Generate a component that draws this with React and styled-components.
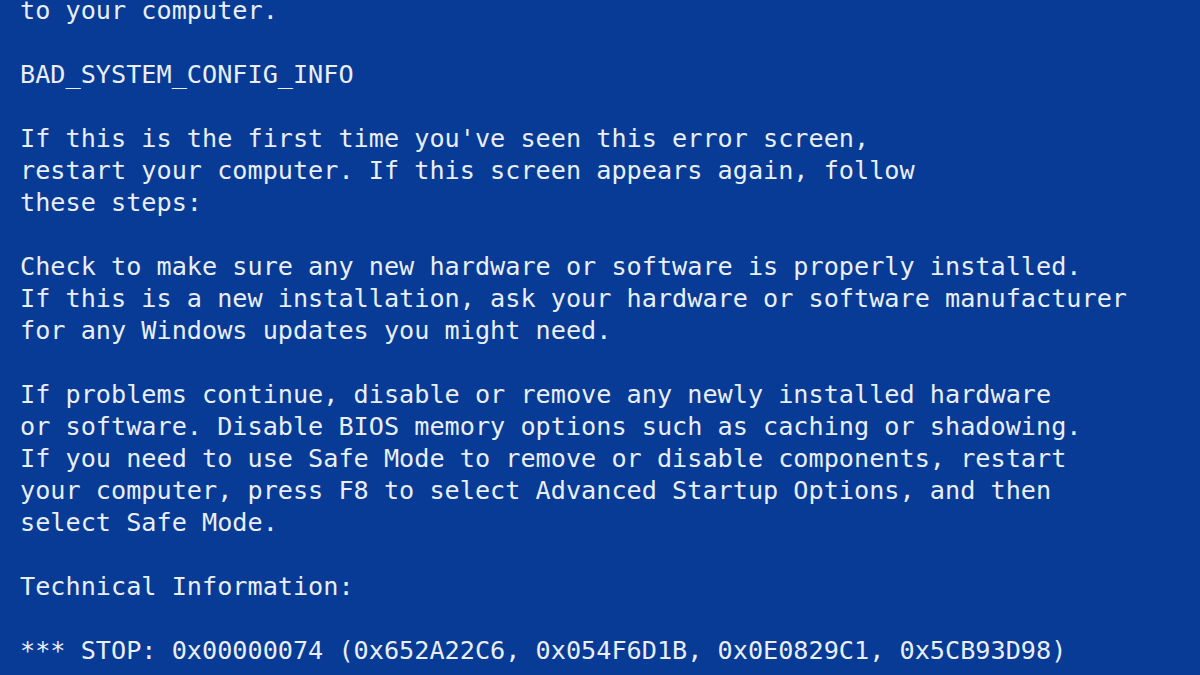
import React from 'react'
import styled, { createGlobalStyle } from 'styled-components'

const Global = createGlobalStyle`
html, body {
  margin: 0;
  padding: 0;
  background: #073b95;
}
`

const Screen = styled.div`
width: 1200px;
height: 675px;
overflow: hidden;
background-color: #073b95;
color: #e9eef7;
font-family: "DejaVu Sans Mono", "Liberation Mono", monospace;
font-size: 25.2px;
line-height: 32px;
padding: 0 20px;
box-sizing: border-box;
`
const Body = styled.div`
margin-top: -5px;
display: flex;
flex-direction: column;
gap: 32px;
`
const Para = styled.p`
margin: 0;
white-space: pre;
`

const paragraphs = [
  'to your computer.',
  'BAD_SYSTEM_CONFIG_INFO',
  "If this is the first time you've seen this error screen,\nrestart your computer. If this screen appears again, follow\nthese steps:",
  'Check to make sure any new hardware or software is properly installed.\nIf this is a new installation, ask your hardware or software manufacturer\nfor any Windows updates you might need.',
  'If problems continue, disable or remove any newly installed hardware\nor software. Disable BIOS memory options such as caching or shadowing.\nIf you need to use Safe Mode to remove or disable components, restart\nyour computer, press F8 to select Advanced Startup Options, and then\nselect Safe Mode.',
  'Technical Information:',
  '*** STOP: 0x00000074 (0x652A22C6, 0x054F6D1B, 0x0E0829C1, 0x5CB93D98)',
]

function App() {
  return (
    <>
      <Global />
      <Screen>
        <Body>
          {paragraphs.map((p, i) => (
            <Para key={i}>{p}</Para>
          ))}
        </Body>
      </Screen>
    </>
  )
}

export default App
